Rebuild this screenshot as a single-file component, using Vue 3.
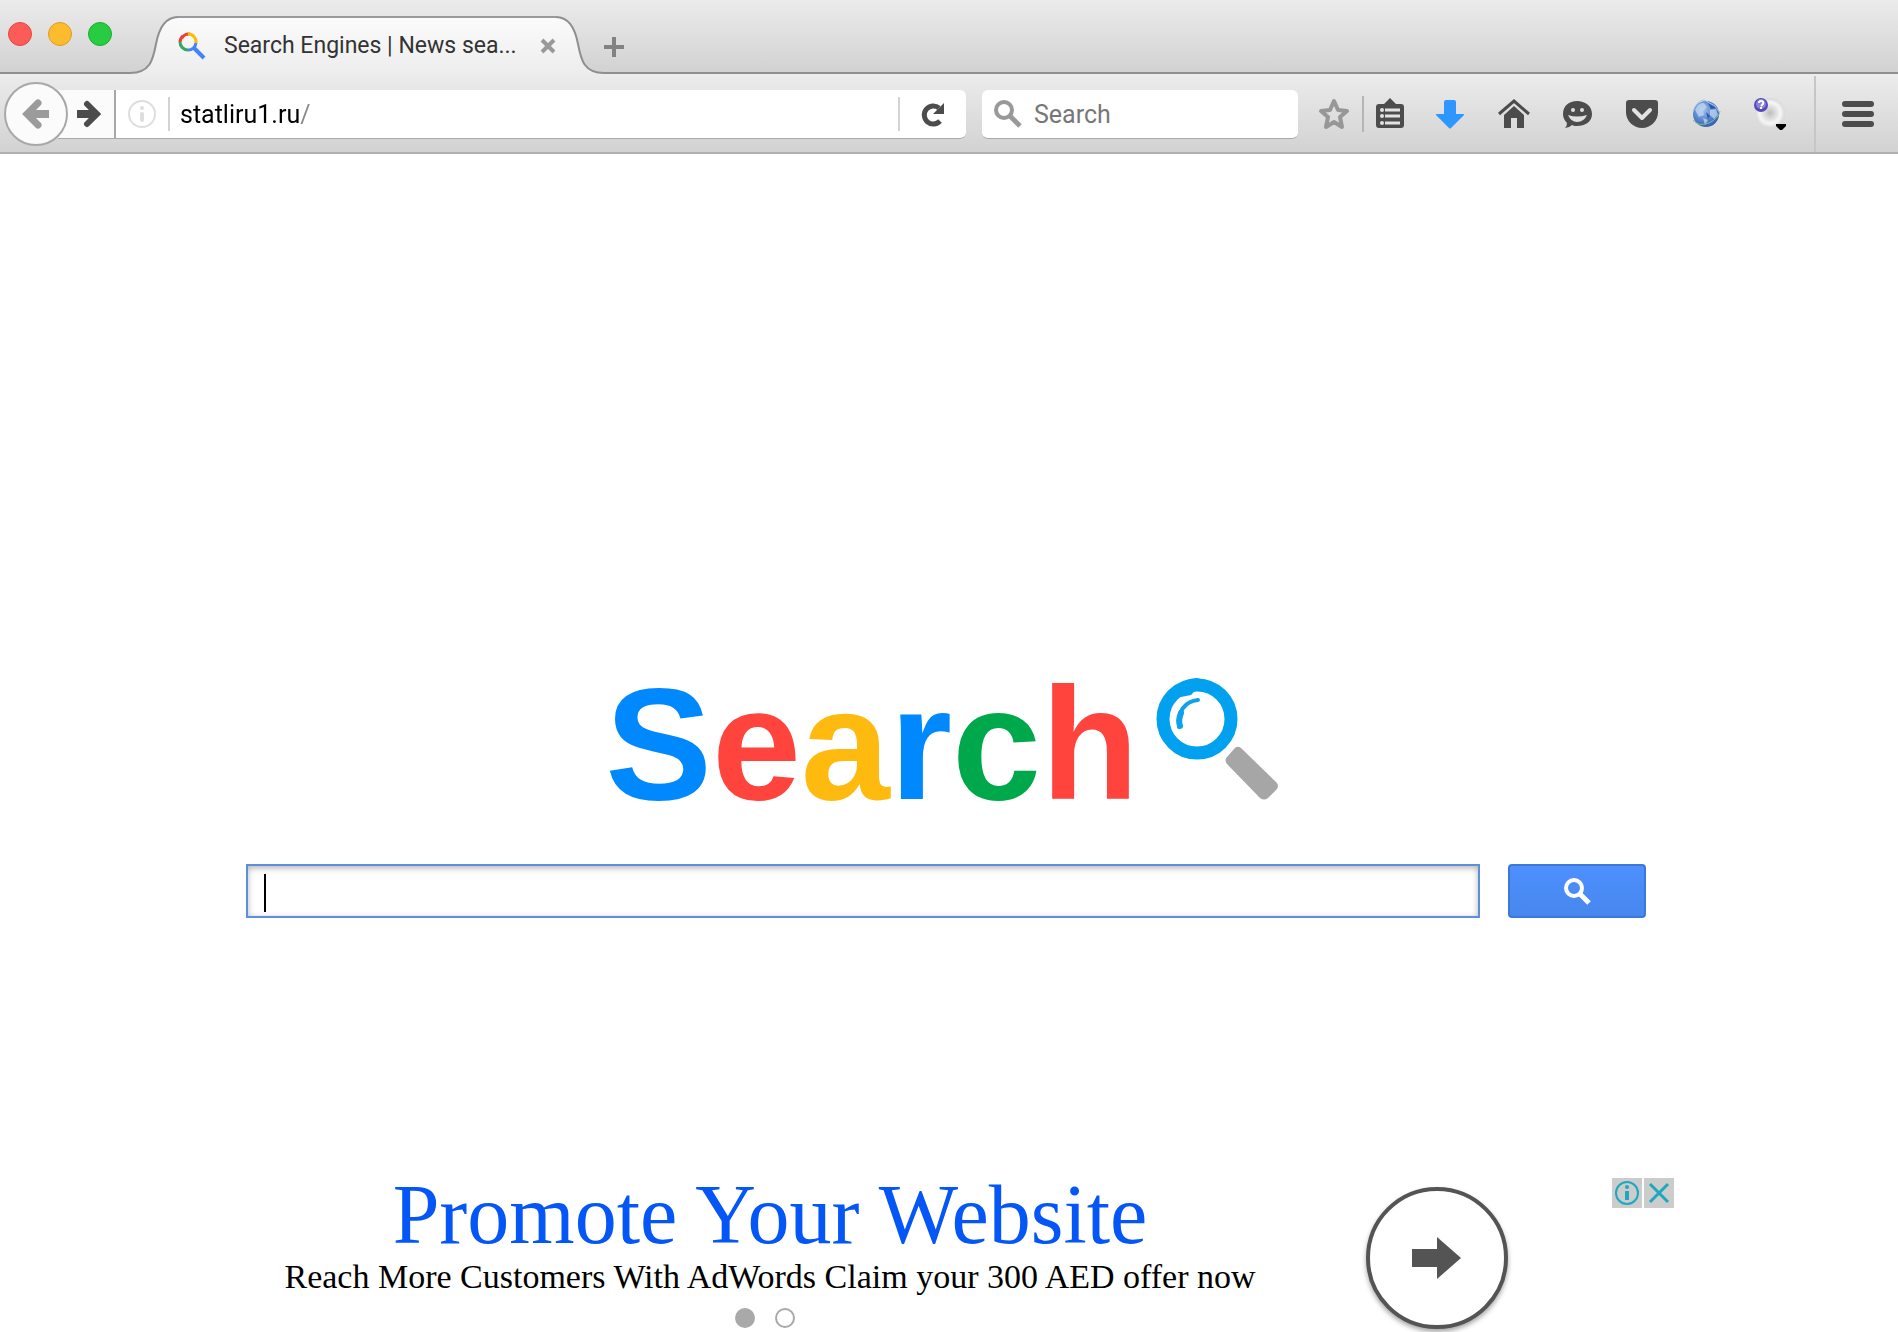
<script setup>
import { ref } from 'vue'

const address = ref('statliru1.ru/')
const toolbarQuery = ref('')
const query = ref('')
const slide = ref(0)

const windowButtons = [
  { name: 'Close', cls: 'red' },
  { name: 'Minimize', cls: 'yellow' },
  { name: 'Zoom', cls: 'green' }
]

const logo = [
  { char: 'S', cls: 'blue' },
  { char: 'e', cls: 'red' },
  { char: 'a', cls: 'yellow' },
  { char: 'r', cls: 'blue' },
  { char: 'c', cls: 'green' },
  { char: 'h', cls: 'red' }
]
</script>

<template>
  <div class="browser">
    <header class="tab-strip">
      <div class="lights">
        <button v-for="b in windowButtons" :key="b.name" class="light" :class="b.cls" :aria-label="b.name"></button>
      </div>

      <div class="tab">
        <svg class="curve" width="48" height="58" viewBox="0 0 48 58">
          <path d="M0 57C20 57 23 44 26 28C29 12 35 1 48 1V58H0Z" fill="url(#tabFill)" />
          <path d="M0 57C20 57 23 44 26 28C29 12 35 1 48 1" fill="none" stroke="#8f8f8f" stroke-width="2" />
          <defs>
            <linearGradient id="tabFill" x1="0" y1="0" x2="0" y2="1">
              <stop offset="0" stop-color="#fbfbfb" />
              <stop offset="1" stop-color="#ededed" />
            </linearGradient>
          </defs>
        </svg>
        <div class="tab-body">
          <svg class="favicon" width="28" height="28" viewBox="0 0 28 28" fill="none" stroke-width="3">
            <path d="M4 6A8 8 0 0 1 12 2" stroke="#ea4335" />
            <path d="M10 2A8 8 0 0 1 18 11" stroke="#fbbc05" />
            <path d="M5 4A8 8 0 0 0 2 10" stroke="#ea4335" />
            <path d="M2 10A8 8 0 0 0 10 18" stroke="#34a860" />
            <path d="M10 18A8 8 0 0 0 18 11" stroke="#4285f4" />
            <path d="M16 16L26 26" stroke="#4285f4" stroke-width="4" />
          </svg>
          <span class="tab-title">Search Engines | News sea...</span>
          <button class="tab-close" aria-label="Close tab">
            <svg width="16" height="16" viewBox="0 0 16 16">
              <path d="M2 2L14 14M14 2L2 14" stroke="#999" stroke-width="4" />
            </svg>
          </button>
        </div>
        <svg class="curve" width="48" height="58" viewBox="0 0 48 58">
          <path d="M48 57C28 57 25 44 22 28C19 12 13 1 0 1V58H48Z" fill="url(#tabFill)" />
          <path d="M48 57C28 57 25 44 22 28C19 12 13 1 0 1" fill="none" stroke="#8f8f8f" stroke-width="2" />
        </svg>
      </div>

      <button class="new-tab" aria-label="New tab">
        <svg width="20" height="20" viewBox="0 0 20 20">
          <path d="M10 0V20M0 10H20" stroke="#828282" stroke-width="4" />
        </svg>
      </button>
    </header>

    <nav class="toolbar">
      <button class="back" aria-label="Back">
        <svg width="28" height="32" viewBox="0 0 28 32" fill="none" stroke="#9b9b9b" stroke-width="7">
          <path d="M16 5L5 16L16 27" stroke-linecap="round" />
          <path d="M6 16H27" stroke-width="8" />
        </svg>
      </button>
      <div class="url-bar">
        <button class="forward" aria-label="Forward">
          <svg width="24" height="28" viewBox="0 0 24 28" fill="none" stroke="#4c4c4c" stroke-width="6">
            <path d="M10 4L20 14L10 24" stroke-linecap="round" />
            <path d="M0 14H19" stroke-width="8" />
          </svg>
        </button>
        <button class="info" aria-label="Site information">
          <svg width="28" height="28" viewBox="0 0 28 28">
            <circle cx="14" cy="14" r="13" fill="none" stroke="#dedede" stroke-width="2" />
            <circle cx="14" cy="8" r="2" fill="#dedede" />
            <rect x="12" y="12" width="4" height="10" rx="2" fill="#dedede" />
          </svg>
        </button>
        <span class="line"></span>
        <input v-model="address" class="address" type="text" aria-label="Address" />
        <span class="line"></span>
        <button class="reload" aria-label="Reload">
          <svg width="24" height="26" viewBox="0 0 24 26">
            <path d="M18 7A9 9 0 1 0 19 20" fill="none" stroke="#4c4c4c" stroke-width="5" />
            <path d="M23 2V13H12Z" fill="#4c4c4c" />
          </svg>
        </button>
      </div>

      <label class="toolbar-search">
        <svg width="28" height="28" viewBox="0 0 28 28" fill="none" stroke="#999">
          <circle cx="10" cy="10" r="8" stroke-width="4" />
          <path d="M16 16L26 26" stroke-width="5" />
        </svg>
        <input v-model="toolbarQuery" type="text" placeholder="Search" aria-label="Search the web" />
      </label>

      <div class="icons">
        <div class="bookmarks">
          <button aria-label="Bookmark">
            <svg width="32" height="32" viewBox="0 0 32 32">
              <path d="M16 3L20 12L29 13L22 19L24 29L16 24L8 29L10 19L3 13L12 12Z" fill="none" stroke="#979797" stroke-width="4" stroke-linejoin="round" />
            </svg>
          </button>
          <span class="divider"></span>
          <button aria-label="Bookmarks menu">
            <svg width="28" height="32" viewBox="2 0 28 32">
              <path d="M5 6H10L16 0L22 6H27Q30 6 30 9V27Q30 30 27 30H5Q2 30 2 27V9Q2 6 5 6Z" fill="#4c4c4c" />
              <path d="M11 12H26M11 18H26M11 25H26" stroke="#e2e2e2" stroke-width="3" />
              <circle cx="8" cy="12" r="2" fill="#e2e2e2" />
              <circle cx="8" cy="18" r="2" fill="#e2e2e2" />
              <circle cx="8" cy="25" r="2" fill="#e2e2e2" />
            </svg>
          </button>
        </div>
        <button aria-label="Downloads">
          <svg width="32" height="32" viewBox="0 0 32 32">
            <path d="M10 4Q10 2 12 2H20Q22 2 22 4V16H29Q31 16 30 17L17 30Q16 31 15 30L2 17Q1 16 3 16H10Z" fill="#2d96ff" />
          </svg>
        </button>
        <button aria-label="Home">
          <svg width="32" height="32" viewBox="0 0 32 32">
            <path d="M1 16L16 3L31 16" fill="none" stroke="#4c4c4c" stroke-width="3" />
            <path d="M16 8L26 17V30H19V20H13V30H6V17Z" fill="#4c4c4c" />
          </svg>
        </button>
        <button aria-label="Chat">
          <svg width="32" height="32" viewBox="0 0 32 32">
            <path d="M15 3C23 3 30 8 30 16C30 24 23 28 15 28C13 28 12 28 10 27Q7 30 3 30Q5 28 5 25C2 22 1 19 1 16C1 8 7 3 15 3Z" fill="#4c4c4c" />
            <circle cx="11" cy="12" r="2" fill="#e0e0e0" />
            <circle cx="20" cy="12" r="2" fill="#e0e0e0" />
            <path d="M6 17Q15 20 25 17Q22 24 15 24Q9 24 6 17Z" fill="#e0e0e0" />
          </svg>
        </button>
        <button aria-label="Pocket">
          <svg width="32" height="32" viewBox="0 0 32 32">
            <path d="M3 2H29Q32 2 32 5V14A16 16 0 0 1 0 14V5Q0 2 3 2Z" fill="#4c4c4c" />
            <path d="M8 12L16 20L24 12" fill="none" stroke="#e2e2e2" stroke-width="4" stroke-linecap="round" stroke-linejoin="round" />
          </svg>
        </button>
        <button aria-label="Globe">
          <svg width="32" height="32" viewBox="0 0 32 32">
            <defs>
              <radialGradient id="globe" cx="0.4" cy="0.35" r="0.7">
                <stop offset="0" stop-color="#9fc0ea" />
                <stop offset="0.6" stop-color="#5581c8" />
                <stop offset="1" stop-color="#2f5bad" />
              </radialGradient>
            </defs>
            <circle cx="16" cy="16" r="13" fill="url(#globe)" />
            <path d="M5 12Q8 4 14 5L17 9L13 13L14 17L9 19ZM20 12L26 11L28 17L24 21L20 17ZM13 20L18 22L15 27Z" fill="#c3d8f2" opacity="0.75" />
            <path d="M18 5L26 10L21 11ZM16 14L20 18L18 21Z" fill="#2a58ac" />
            <path d="M3 22Q8 29 19 25Q29 20 30 13" fill="none" stroke="#7fbd91" />
            <path d="M3 14Q6 3 14 2L25 8L30 15" fill="none" stroke="#a5c3e8" />
          </svg>
        </button>
        <button aria-label="Help">
          <svg width="32" height="32" viewBox="0 0 32 32">
            <defs>
              <radialGradient id="orb">
                <stop offset="0" stop-color="#bdbdbd" />
                <stop offset="0.4" stop-color="#dedede" />
                <stop offset="0.7" stop-color="#f6f6f6" />
                <stop offset="1" stop-color="#d8d8d8" />
              </radialGradient>
            </defs>
            <circle cx="16" cy="15" r="15" fill="url(#orb)" />
            <circle cx="7" cy="7" r="7" fill="#5549ba" />
            <circle cx="7" cy="6" r="5" fill="#8b82e0" />
            <path d="M5 5Q5 3 7 3Q10 3 9 6L7 8M7 9V11" fill="none" stroke="#fff" stroke-width="2" />
            <path d="M22 26H32V28L28 32H26L22 28Z" fill="#000" />
          </svg>
        </button>
      </div>
      <button class="menu" aria-label="Open menu">
        <svg width="32" height="26" viewBox="0 0 32 26">
          <path d="M3 3H29M3 13H29M3 23H29" stroke="#4c4c4c" stroke-width="6" stroke-linecap="round" />
        </svg>
      </button>
    </nav>

    <main class="page">
      <div class="logo">
        <h1><span v-for="(l, i) in logo" :key="i" :class="l.cls">{{ l.char }}</span></h1>
        <svg width="132" height="136" viewBox="0 -4 132 136">
          <circle cx="42" cy="39" r="34" fill="none" stroke="#02a1ef" stroke-width="13" />
          <path d="M22 8Q30 -2 42 -2L50 0L36 15L26 17Z" fill="#02a1ef" />
          <path d="M24 47C22 32 30 21 43 20" fill="none" stroke="#0da2ea" stroke-width="4" stroke-linecap="round" />
          <path d="M25 46Q23 40 26 33" fill="none" stroke="#0da2ea" stroke-width="6" stroke-linecap="round" />
          <path d="M86 68L121 102Q125 106 121 110L113 118Q109 121 105 118L72 84Q69 80 72 77L79 69Q82 65 86 68Z" fill="#a6a6a6" />
        </svg>
      </div>

      <form class="search-form" @submit.prevent>
        <div class="field">
          <input v-model="query" type="text" aria-label="Search query" />
          <span v-if="!query" class="caret"></span>
        </div>
        <button class="submit" aria-label="Search">
          <svg width="28" height="28" viewBox="0 0 28 28" fill="none" stroke="#fff">
            <circle cx="11" cy="11" r="8" stroke-width="4" />
            <path d="M17 17L26 26" stroke-width="5" />
          </svg>
        </button>
      </form>

      <section class="ad">
        <div class="ad-copy">
          <a class="ad-title" href="#">Promote Your Website</a>
          <p>Reach More Customers With AdWords Claim your 300 AED offer now</p>
          <div class="dots">
            <button
              v-for="n in 2"
              :key="n"
              class="dot"
              :class="{ active: slide === n - 1 }"
              :aria-label="'Slide ' + n"
              @click="slide = n - 1"
            ></button>
          </div>
        </div>
        <button class="ad-go" aria-label="Visit site">
          <svg width="50" height="42" viewBox="0 0 50 42">
            <path d="M0 12H25V0L49 21L25 42V30H0Z" fill="#545454" />
          </svg>
        </button>
        <div class="ad-choices">
          <button aria-label="About this ad">
            <svg width="30" height="30" viewBox="0 0 30 30">
              <circle cx="15" cy="15" r="11" fill="none" stroke="#1aa9c0" stroke-width="2" />
              <circle cx="15" cy="9" r="2" fill="#1aa9c0" />
              <path d="M15 13V22" stroke="#1aa9c0" stroke-width="4" />
            </svg>
          </button>
          <button aria-label="Close ad">
            <svg width="30" height="30" viewBox="0 0 30 30">
              <path d="M6 6L24 24M24 6L6 24" stroke="#1aa9c0" stroke-width="3" />
            </svg>
          </button>
        </div>
      </section>
    </main>
  </div>
</template>

<style>
body {
  background: #fff;
}
</style>

<style scoped>
.browser {
  font-family: Roboto, "Liberation Sans", sans-serif;
  min-height: 100vh;
}

button {
  display: flex;
  align-items: center;
  justify-content: center;
  padding: 0;
  border: none;
  background: none;
  cursor: pointer;
  flex-shrink: 0;
}

input {
  font-family: inherit;
  outline: none;
  box-sizing: border-box;
  min-width: 0;
}

svg {
  display: block;
  flex-shrink: 0;
}

/* Tab strip */
.tab-strip {
  display: flex;
  align-items: flex-end;
  box-sizing: border-box;
  height: 74px;
  border-bottom: 2px solid #8f8f8f;
  background: linear-gradient(#ebebeb, #d2d2d2);
}

.lights {
  display: flex;
  gap: 16px;
  padding: 0 18px 26px 8px;
}

.light {
  width: 24px;
  height: 24px;
  border-radius: 50%;
  border: 1px solid;
}

.light.red {
  background: #fc5b57;
  border-color: #df4744;
}

.light.yellow {
  background: #fdbc2e;
  border-color: #dd9d25;
}

.light.green {
  background: #28cc40;
  border-color: #1fab2f;
}

.tab {
  display: flex;
  margin-bottom: -2px;
}

.tab-body {
  display: flex;
  align-items: center;
  box-sizing: border-box;
  width: 378px;
  height: 58px;
  border-top: 2px solid #999;
  background: linear-gradient(#fbfbfb, #ededed);
}

.tab-title {
  flex: 1;
  margin-left: 18px;
  font-size: 23px;
  line-height: 28px;
  color: #333;
  white-space: nowrap;
}

.new-tab {
  padding-bottom: 15px;
}

/* Navigation toolbar */
.toolbar {
  display: flex;
  align-items: center;
  box-sizing: border-box;
  height: 80px;
  padding: 2px 0 0 4px;
  border-bottom: 2px solid #b0b0b0;
  background: linear-gradient(#ececec, #d2d2d2);
}

.back {
  position: relative;
  z-index: 1;
  width: 64px;
  height: 64px;
  border: 2px solid #a8a8a8;
  border-radius: 50%;
  background: #fbfbfb;
}

.url-bar {
  display: flex;
  align-items: center;
  flex: 1;
  box-sizing: border-box;
  height: 49px;
  margin-left: -10px;
  border-bottom: 1px solid #aaa;
  border-radius: 0 6px 6px 0;
  background: #fff;
}

.forward {
  width: 58px;
  height: 48px;
  padding-left: 6px;
  border-right: 2px solid #a8a8a8;
  background: #fbfbfb;
}

.info {
  margin: 0 12px;
}

.line {
  width: 2px;
  height: 34px;
  background: #d3d3d3;
}

.address {
  flex: 1;
  height: 48px;
  padding: 2px 10px 0;
  border: none;
  font-size: 25px;
  color: #000;
  /* trailing slash is dimmed */
  background: linear-gradient(to right, #000 129px, #888 129px);
  background-clip: text;
  -webkit-background-clip: text;
  -webkit-text-fill-color: transparent;
}

.reload {
  width: 66px;
  height: 48px;
}

.toolbar-search {
  display: flex;
  align-items: center;
  box-sizing: border-box;
  width: 316px;
  height: 49px;
  margin: 0 20px 0 16px;
  padding-left: 12px;
  border-bottom: 1px solid #aaa;
  border-radius: 6px;
  background: #fff;
}

.toolbar-search input {
  flex: 1;
  height: 48px;
  padding: 2px 12px 0;
  border: none;
  background: none;
  font-size: 25px;
}

.toolbar-search input::placeholder {
  color: #777;
}

.icons {
  display: flex;
  align-items: center;
  gap: 32px;
}

.bookmarks {
  display: flex;
  align-items: center;
  gap: 12px;
  margin-right: -2px;
}

.divider {
  width: 2px;
  height: 36px;
  background: #b5b5b5;
}

.menu {
  height: 76px;
  margin-left: 28px;
  padding: 0 24px 0 26px;
  border-left: 2px solid #c6c6c6;
}

/* Page */
.page {
  padding: 510px 224px 0 246px;
}

.logo {
  display: flex;
  align-items: center;
  justify-content: center;
  gap: 16px;
  height: 160px;
  padding-right: 28px;
}

.logo h1 {
  margin: 0;
  font-family: "Liberation Sans", Arial, sans-serif;
  font-size: 160px;
  font-weight: bold;
  line-height: 160px;
}

.logo .blue {
  color: #0088ff;
}

.logo .red {
  color: #ff433d;
}

.logo .yellow {
  color: #ffba10;
}

.logo .green {
  color: #00a84c;
}

.search-form {
  display: flex;
  gap: 28px;
  margin-top: 40px;
  padding-right: 28px;
}

.field {
  position: relative;
  flex: 1;
}

.field input {
  display: block;
  width: 100%;
  height: 54px;
  padding: 0 16px;
  border: 2px solid #5e8fdc;
  box-shadow: inset 0 2px 6px rgba(0, 0, 0, 0.3);
  font-size: 32px;
}

.caret {
  position: absolute;
  top: 10px;
  left: 18px;
  width: 2px;
  height: 38px;
  background: #000;
}

.submit {
  width: 138px;
  height: 54px;
  border: 2px solid #3c78dc;
  border-radius: 4px;
  background: linear-gradient(#4d90fe, #4787ed);
}

.ad {
  display: flex;
  align-items: flex-start;
  margin-top: 255px;
  font-family: "Liberation Serif", "Times New Roman", serif;
}

.ad-copy {
  flex: 1;
  text-align: center;
}

.ad-title {
  display: block;
  font-size: 84px;
  line-height: 84px;
  color: #0556f7;
  text-decoration: none;
}

.ad-copy p {
  margin: 0;
  font-size: 34px;
  line-height: 40px;
  color: #000;
}

.dots {
  display: flex;
  justify-content: center;
  gap: 20px;
  margin-top: 11px;
  padding-right: 10px;
}

.dot {
  width: 20px;
  height: 20px;
  border: 2px solid #a9a9a9;
  border-radius: 50%;
}

.dot.active {
  background: #a9a9a9;
}

.ad-go {
  width: 142px;
  height: 142px;
  margin: 14px 104px 0 72px;
  border: 4px solid #545454;
  border-radius: 50%;
  background: #fff;
  box-shadow: 0 3px 5px rgba(0, 0, 0, 0.35);
}

.ad-choices {
  display: flex;
  gap: 2px;
  margin-top: 5px;
}

.ad-choices button {
  background: #ccc;
}
</style>
